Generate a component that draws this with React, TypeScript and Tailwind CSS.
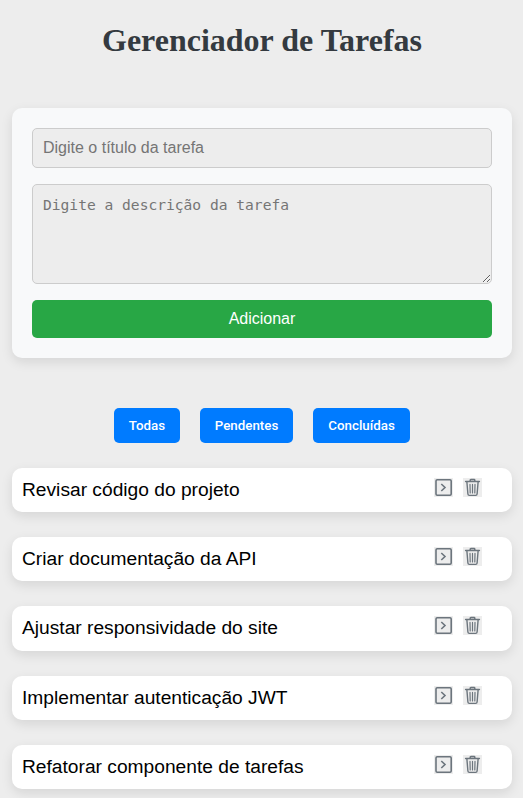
const tasks = [
  'Revisar código do projeto',
  'Criar documentação da API',
  'Ajustar responsividade do site',
  'Implementar autenticação JWT',
  'Refatorar componente de tarefas',
];

const filters = [
  { label: 'Todas', width: 'w-[66px]' },
  { label: 'Pendentes', width: 'w-[93px]' },
  { label: 'Concluídas', width: 'w-[97px]' },
];

function OpenIcon() {
  return (
    <svg className="block size-full" viewBox="0 0 19 19" fill="none" stroke="#6c757d">
      <rect x="2" y="1.8" width="15.2" height="15.4" rx="1.2" strokeWidth="1.6" />
      <path d="M7.3 6 11 9.5 7.3 13" strokeWidth="1.6" />
    </svg>
  );
}

function TrashIcon() {
  return (
    <svg className="block size-full" viewBox="0 0 19 19" fill="none" stroke="#6c757d" strokeLinecap="round">
      <path d="M2.6 3.6h13.8M7.2 3.4V2.3q0-.7.7-.7h3.2q.7 0 .7.7v1.1" strokeWidth="1.5" />
      <path d="m3.9 4 1 12q.1 1.4 1.4 1.4h6.4q1.3 0 1.4-1.4l1-12" strokeWidth="1.4" />
      <path d="m7 6.4.2 8.6M9.5 6.4V15M12 6.4l-.2 8.6" strokeWidth="1.2" />
    </svg>
  );
}

export default function App() {
  return (
    <div className="h-[798px] overflow-hidden bg-[#ededed] pl-3 pr-[11px] font-['Liberation_Sans',Arial,sans-serif]">
      <h1 className="pt-[22px] text-center font-['Liberation_Serif','Times_New_Roman',serif] text-[32px] leading-[37px] font-bold text-[#343a40]">
        Gerenciador de Tarefas
      </h1>

      <form className="mt-[49px] flex h-[250px] w-[500px] flex-col rounded-[10px] bg-[#f8f9fa] p-5 shadow-[0_4px_12px_rgba(0,0,0,0.1)]">
        <input
          className="h-10 w-full shrink-0 rounded-[5px] border border-[#ccc] bg-[#ededed] px-2.5 text-base placeholder:text-[#757575]"
          placeholder="Digite o título da tarefa"
        />
        <textarea
          className="mt-4 block h-[100px] w-full shrink-0 resize-y rounded-[5px] border border-[#ccc] bg-[#ededed] p-2.5 font-['DejaVu_Sans_Mono',monospace] text-[14.6px] leading-[19px] placeholder:text-[#757575]"
          placeholder="Digite a descrição da tarefa"
        />
        <button type="button" className="mt-4 h-[38px] w-full shrink-0 rounded-[5px] bg-[#28a745] text-base text-white">
          Adicionar
        </button>
      </form>

      <div className="mt-[50px] flex justify-center gap-5">
        {filters.map((f) => (
          <button
            key={f.label}
            type="button"
            className={`${f.width} h-[35px] rounded-[5px] bg-[#007bff] text-center font-[Roboto,sans-serif] text-[13.33px] font-medium whitespace-nowrap text-white`}
          >
            {f.label}
          </button>
        ))}
      </div>

      <ul className="mt-[25px] flex flex-col gap-[25px]">
        {tasks.map((task) => (
          <li
            key={task}
            className="flex h-[44.2px] w-[500px] shrink-0 justify-between rounded-[10px] bg-white pt-2.5 pr-[30px] pl-2.5 shadow-[0_4px_12px_rgba(0,0,0,0.1)]"
          >
            <span className="text-[19.2px] leading-[23px] text-black">{task}</span>
            <div className="flex gap-2.5">
              <button type="button" aria-label="Abrir" className="size-[19px] bg-[#ededed]">
                <OpenIcon />
              </button>
              <button type="button" aria-label="Excluir" className="size-[19px] bg-[#ededed]">
                <TrashIcon />
              </button>
            </div>
          </li>
        ))}
      </ul>
    </div>
  );
}
